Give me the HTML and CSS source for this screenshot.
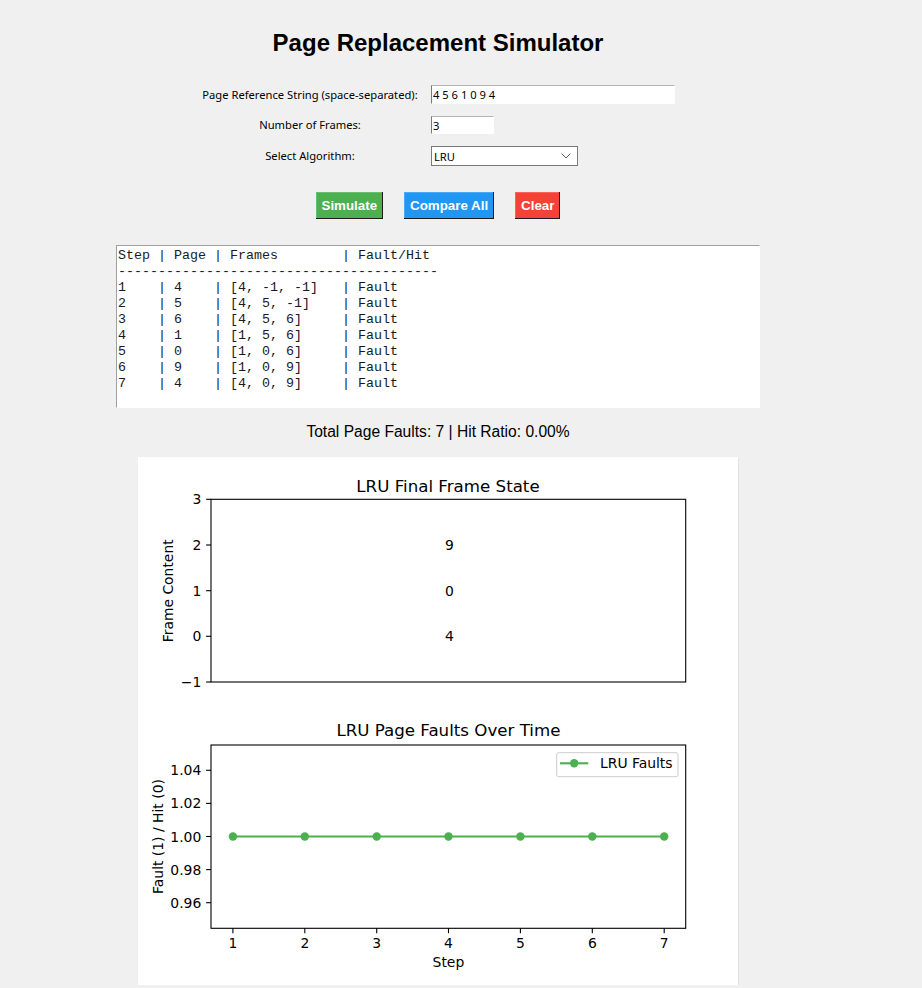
FILE: index.html
```html
<!DOCTYPE html>
<html>
<head>
<meta charset="utf-8">
<title>Page Replacement Simulator</title>
<link rel="stylesheet" href="styles.css">
</head>
<body>
<div class="app">
  <h1 class="title">Page Replacement Simulator</h1>

  <div class="form">
    <label class="form-label">Page Reference String (space-separated):</label>
    <input class="entry entry-wide" type="text" value="4 5 6 1 0 9 4">
    <label class="form-label">Number of Frames:</label>
    <input class="entry entry-narrow" type="text" value="3">
    <label class="form-label">Select Algorithm:</label>
    <div class="combo">
      <span>LRU</span>
      <svg class="chevron" width="10" height="6" viewBox="0 0 10 6"><polyline points="0.5,0.5 5,5 9.5,0.5" fill="none" stroke="#606060" stroke-width="1"/></svg>
    </div>
  </div>

  <div class="buttons">
    <button class="btn btn-green">Simulate</button>
    <button class="btn btn-blue">Compare All</button>
    <button class="btn btn-red">Clear</button>
  </div>

<pre class="output">Step | Page | Frames        | Fault/Hit
----------------------------------------
1    | 4    | [4, -1, -1]   | Fault
2    | 5    | [4, 5, -1]    | Fault
3    | 6    | [4, 5, 6]     | Fault
4    | 1    | [1, 5, 6]     | Fault
5    | 0    | [1, 0, 6]     | Fault
6    | 9    | [1, 0, 9]     | Fault
7    | 4    | [4, 0, 9]     | Fault
</pre>

  <div class="summary">Total Page Faults: 7 | Hit Ratio: 0.00%</div>

  <div class="chart-panel">
    <svg class="chart" width="600" height="528" viewBox="0 0 600 528">
      <!-- Plot 1 -->
      <text class="ax-title" x="310" y="34.7" text-anchor="middle">LRU Final Frame State</text>
      <rect x="73" y="42.3" width="474.7" height="182.7" fill="#fff" stroke="#000" stroke-width="1.1"/>
      <g stroke="#000" stroke-width="1.1">
        <line x1="68.1" y1="42.3" x2="73" y2="42.3"/>
        <line x1="68.1" y1="88" x2="73" y2="88"/>
        <line x1="68.1" y1="133.7" x2="73" y2="133.7"/>
        <line x1="68.1" y1="179.3" x2="73" y2="179.3"/>
        <line x1="68.1" y1="225" x2="73" y2="225"/>
      </g>
      <g class="tick" text-anchor="end">
        <text x="63.3" y="47.3">3</text>
        <text x="63.3" y="93">2</text>
        <text x="63.3" y="138.7">1</text>
        <text x="63.3" y="184.3">0</text>
        <text x="63.3" y="230">−1</text>
      </g>
      <g class="tick" text-anchor="middle">
        <text x="311.5" y="93">9</text>
        <text x="311.5" y="138.7">0</text>
        <text x="311.5" y="184.3">4</text>
      </g>
      <text class="ax-label" transform="translate(35.3,133.8) rotate(-90)" text-anchor="middle">Frame Content</text>

      <!-- Plot 2 -->
      <text class="ax-title" x="310.4" y="278.7" text-anchor="middle">LRU Page Faults Over Time</text>
      <rect x="73" y="288" width="474.7" height="183.3" fill="#fff" stroke="#000" stroke-width="1.1"/>
      <g stroke="#000" stroke-width="1.1">
        <line x1="68.1" y1="313.3" x2="73" y2="313.3"/>
        <line x1="68.1" y1="346.4" x2="73" y2="346.4"/>
        <line x1="68.1" y1="379.5" x2="73" y2="379.5"/>
        <line x1="68.1" y1="412.6" x2="73" y2="412.6"/>
        <line x1="68.1" y1="445.7" x2="73" y2="445.7"/>
        <line x1="94.9" y1="471.3" x2="94.9" y2="476.2"/>
        <line x1="166.8" y1="471.3" x2="166.8" y2="476.2"/>
        <line x1="238.7" y1="471.3" x2="238.7" y2="476.2"/>
        <line x1="310.5" y1="471.3" x2="310.5" y2="476.2"/>
        <line x1="382.4" y1="471.3" x2="382.4" y2="476.2"/>
        <line x1="454.3" y1="471.3" x2="454.3" y2="476.2"/>
        <line x1="526.2" y1="471.3" x2="526.2" y2="476.2"/>
      </g>
      <g class="tick" text-anchor="end">
        <text x="63.3" y="318.3">1.04</text>
        <text x="63.3" y="351.4">1.02</text>
        <text x="63.3" y="384.5">1.00</text>
        <text x="63.3" y="417.6">0.98</text>
        <text x="63.3" y="450.7">0.96</text>
      </g>
      <g class="tick" text-anchor="middle">
        <text x="94.9" y="491">1</text>
        <text x="166.8" y="491">2</text>
        <text x="238.7" y="491">3</text>
        <text x="310.5" y="491">4</text>
        <text x="382.4" y="491">5</text>
        <text x="454.3" y="491">6</text>
        <text x="526.2" y="491">7</text>
      </g>
      <text class="ax-label" x="310.4" y="509.8" text-anchor="middle">Step</text>
      <text class="ax-label" transform="translate(24.5,379.5) rotate(-90)" text-anchor="middle">Fault (1) / Hit (0)</text>

      <polyline points="94.9,379.5 526.2,379.5" fill="none" stroke="#4CAF50" stroke-width="2.1"/>
      <g fill="#4CAF50">
        <circle cx="94.9" cy="379.5" r="4.2"/>
        <circle cx="166.8" cy="379.5" r="4.2"/>
        <circle cx="238.7" cy="379.5" r="4.2"/>
        <circle cx="310.5" cy="379.5" r="4.2"/>
        <circle cx="382.4" cy="379.5" r="4.2"/>
        <circle cx="454.3" cy="379.5" r="4.2"/>
        <circle cx="526.2" cy="379.5" r="4.2"/>
      </g>

      <!-- Legend -->
      <rect x="418.7" y="295.7" width="121.3" height="24" rx="2" ry="2" fill="#fff" fill-opacity="0.8" stroke="#cccccc" stroke-width="1"/>
      <line x1="422" y1="306.3" x2="450.3" y2="306.3" stroke="#4CAF50" stroke-width="2.1"/>
      <circle cx="436.2" cy="306.3" r="4.2" fill="#4CAF50"/>
      <text class="tick" x="462" y="311.3">LRU Faults</text>
    </svg>
  </div>
</div>
</body>
</html>
```

FILE: styles.css
```css
html, body {
  margin: 0;
  padding: 0;
  background: #f0f0f0;
}

.app {
  width: 876px;
  display: flex;
  flex-direction: column;
  align-items: center;
}

.title {
  margin: 29px 0 0 0;
  font-family: "Liberation Sans", Arial, sans-serif;
  font-weight: bold;
  font-size: 24px;
  line-height: 27px;
  color: #000;
}

.form {
  margin-top: 29px;
  display: grid;
  grid-template-columns: 228px 244px;
  grid-template-rows: 19px 18px 20px;
  column-gap: 7px;
  row-gap: 12px;
  padding-right: 5px;
  font-family: "Noto Sans", "Open Sans", sans-serif;
  font-size: 11.2px;
  color: #000;
}

.form-label {
  justify-self: center;
  align-self: center;
  line-height: 14px;
}

.entry {
  box-sizing: border-box;
  margin: 0;
  padding: 0 1px;
  background: #fff;
  border: 1px solid;
  border-color: #b4b4b4 #ffffff #ffffff #7a7a7a;
  font-family: "Noto Sans", "Open Sans", sans-serif;
  font-size: 11.2px;
  color: #000;
  outline: none;
}

.entry-wide {
  width: 244px;
  height: 19px;
}

.entry-narrow {
  width: 63px;
  height: 18px;
}

.combo {
  box-sizing: border-box;
  width: 147px;
  height: 20px;
  background: #fff;
  border: 1px solid #7a7a7a;
  display: flex;
  align-items: center;
  justify-content: space-between;
  padding: 0 6px 0 2px;
}

.chevron {
  display: block;
}

.buttons {
  margin-top: 26px;
  display: flex;
  gap: 21px;
}

.btn {
  height: 27px;
  margin: 0;
  padding: 0 6px;
  border: none;
  font-family: "Liberation Sans", Arial, sans-serif;
  font-weight: bold;
  font-size: 13.33px;
  color: #fff;
  box-shadow: inset -1px -1px 0 #1c1c1c, inset 1px 1px 0 rgba(255, 255, 255, 0.18);
}

.btn-green { background: #4caf50; }
.btn-blue { background: #2196f3; }
.btn-red { background: #f44336; }

.output {
  box-sizing: border-box;
  margin: 26px 0 0 0;
  width: 644px;
  height: 163px;
  padding: 2px 1px 1px 1px;
  background: #fff;
  border: 1px solid;
  border-color: #a0a0a0 #ffffff #ffffff #a0a0a0;
  font-family: "Liberation Mono", "Courier New", monospace;
  font-size: 13.33px;
  line-height: 16px;
  color: #1a1a1a;
  overflow: hidden;
}

.summary {
  margin-top: 15px;
  font-family: "Liberation Sans", Arial, sans-serif;
  font-size: 15.6px;
  line-height: 18px;
  color: #000;
}

.chart-panel {
  margin-top: 16px;
  width: 600px;
  height: 528px;
  background: #fff;
  box-shadow: 1px 1px 0 #e2e2e2;
}

.chart {
  display: block;
}

.chart text {
  font-family: "DejaVu Sans", sans-serif;
  fill: #000;
}

.chart .ax-title {
  font-size: 16.67px;
}

.chart .tick,
.chart .tick text,
.chart .ax-label {
  font-size: 13.9px;
}
```
